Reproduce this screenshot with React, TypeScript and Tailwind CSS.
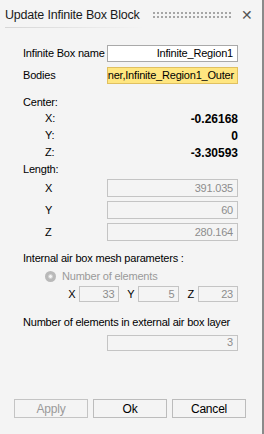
import React from 'react';

function Field({ value, className = '' }: { value: string; className?: string }) {
  return (
    <div
      className={`h-[18px] border border-[#c4c4c4] bg-[#f4f4f4] text-[#8d8d8d] flex items-center justify-end px-[4px] overflow-hidden whitespace-nowrap shrink-0 ${className}`}
    >
      {value}
    </div>
  );
}

export default function App() {
  const dots = Array.from({ length: 40 });

  return (
    <div
      className="w-[264px] h-[434px] bg-[#f4f4f4] text-[11px] tracking-[-0.2px] text-black flex border-r-2 border-[#8a8a8a] box-border overflow-hidden whitespace-nowrap"
      style={{ fontFamily: '"Liberation Sans", Arial, sans-serif' }}
    >
      <div className="flex-1 flex flex-col">
        {/* title bar */}
        <div className="flex items-center h-[27px] pl-[5px] pr-[9px] pt-[3px]">
          <span className="text-[12.5px] text-[#1a1a1a] shrink-0">Update Infinite Box Block</span>
          <div className="ml-auto grid grid-cols-[repeat(20,4px)] gap-y-[2px] w-[80px] mr-[8px]">
            {dots.map((_, i) => (
              <span key={i} className="w-[2px] h-[2px] bg-[#a6a6a6]" />
            ))}
          </div>
          <span className="text-[14px] leading-none text-[#555]">✕</span>
        </div>
        <div className="ml-[5px] w-[140px] h-px bg-gradient-to-r from-[#d6d6d6] to-transparent" />

        <div className="flex flex-col pl-[23px] pr-[24px] pt-[17px]">
          <div className="flex items-center justify-between h-[17px]">
            <span>Infinite Box name</span>
            <div className="w-[131px] h-[17px] border border-[#a9a9a9] bg-white flex items-center justify-end px-[4px]">
              Infinite_Region1
            </div>
          </div>
          <div className="flex items-center justify-between h-[17px] mt-[5px]">
            <span>Bodies</span>
            <div className="w-[131px] h-[17px] border border-[#e0c060] bg-[#ffe680] flex items-center justify-end px-[3px] overflow-hidden">
              <span className="shrink-0">ner,Infinite_Region1_Outer</span>
            </div>
          </div>

          <div className="mt-[10px] h-[16px] leading-[16px]">Center:</div>
          <div className="flex justify-between h-[17px] items-center pl-[22px]">
            <span>X:</span>
            <span className="font-bold text-[12px] tracking-normal">-0.26168</span>
          </div>
          <div className="flex justify-between h-[17px] items-center pl-[22px]">
            <span>Y:</span>
            <span className="font-bold text-[12px] tracking-normal">0</span>
          </div>
          <div className="flex justify-between h-[17px] items-center pl-[22px]">
            <span>Z:</span>
            <span className="font-bold text-[12px] tracking-normal">-3.30593</span>
          </div>
          <div className="h-[16px] leading-[16px]">Length:</div>

          <div className="flex flex-col gap-[4px] mt-[2px]">
            {[
              ['X', '391.035'],
              ['Y', '60'],
              ['Z', '280.164'],
            ].map(([k, v]) => (
              <div key={k} className="flex items-center justify-between pl-[22px]">
                <span>{k}</span>
                <Field value={v} className="w-[131px]" />
              </div>
            ))}
          </div>

          <div className="mt-[9px] h-[16px] leading-[16px]">Internal air box mesh parameters :</div>
          <div className="flex items-center pl-[22px] mt-[2px] h-[16px] text-[#9a9a9a]">
            <span className="w-[11px] h-[11px] rounded-full bg-[#b9b9b9] flex items-center justify-center mr-[6px]">
              <span className="w-[5px] h-[5px] rounded-full bg-[#f4f4f4] border border-[#cfcfcf]" />
            </span>
            Number of elements
          </div>
          <div className="flex items-center justify-end gap-[4px] mt-[2px]">
            <span>X</span>
            <Field value="33" className="w-[40px] !h-[16px] mr-[4px]" />
            <span>Y</span>
            <Field value="5" className="w-[41px] !h-[16px] mr-[4px]" />
            <span>Z</span>
            <Field value="23" className="w-[40px] !h-[16px]" />
          </div>

          <div className="mt-[11px] h-[16px] leading-[16px]">Number of elements in external air box layer</div>
          <div className="flex justify-end mt-[5px]">
            <Field value="3" className="w-[131px] !h-[16px]" />
          </div>
        </div>

        <div className="mt-auto mb-[16px] flex gap-[5px] pl-[14px]">
          <button className="w-[74px] h-[19px] border border-[#c4c4c4] bg-[#f4f4f4] text-[#9a9a9a] text-[12px]">Apply</button>
          <button className="w-[74px] h-[19px] border border-[#bcbcbc] bg-[#f4f4f4] text-[12px]">Ok</button>
          <button className="w-[74px] h-[19px] border border-[#bcbcbc] bg-[#f4f4f4] text-[12px]">Cancel</button>
        </div>
      </div>
    </div>
  );
}
